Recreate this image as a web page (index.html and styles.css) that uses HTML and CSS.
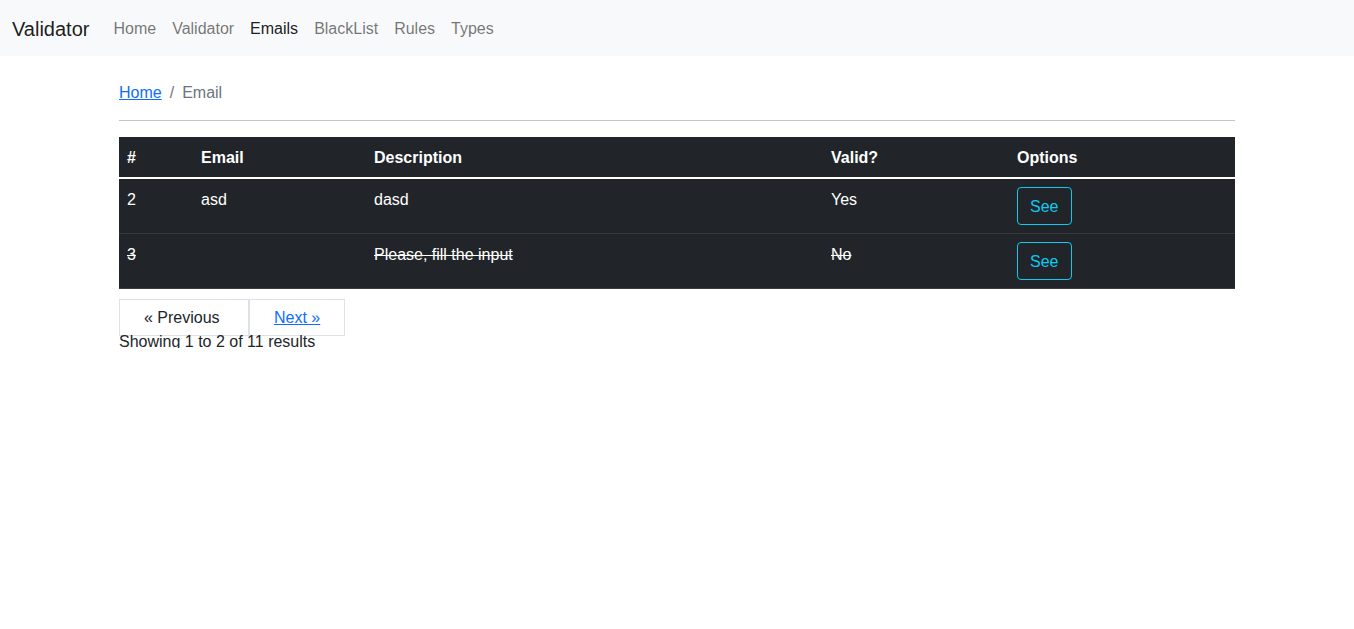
FILE: index.html
```html
<!DOCTYPE html>
<html lang="en">
<head>
<meta charset="utf-8">
<title>Validator</title>
<link rel="stylesheet" href="styles.css">
</head>
<body>
<nav class="navbar">
  <a class="brand" href="#">Validator</a>
  <ul class="nav">
    <li><a class="nav-link" href="#">Home</a></li>
    <li><a class="nav-link" href="#">Validator</a></li>
    <li><a class="nav-link active" href="#">Emails</a></li>
    <li><a class="nav-link" href="#">BlackList</a></li>
    <li><a class="nav-link" href="#">Rules</a></li>
    <li><a class="nav-link" href="#">Types</a></li>
  </ul>
</nav>
<main class="container">
  <ol class="breadcrumb">
    <li><a href="#">Home</a></li>
    <li class="sep">/</li>
    <li class="current">Email</li>
  </ol>
  <hr class="divider">
  <table class="table">
    <colgroup>
      <col class="c1"><col class="c2"><col class="c3"><col class="c4"><col class="c5">
    </colgroup>
    <thead>
      <tr><th>#</th><th>Email</th><th>Description</th><th>Valid?</th><th>Options</th></tr>
    </thead>
    <tbody>
      <tr>
        <td>2</td><td>asd</td><td>dasd</td><td>Yes</td>
        <td><a class="btn" href="#">See</a></td>
      </tr>
      <tr>
        <td><s>3</s></td><td></td><td><s>Please, fill the input</s></td><td><s>No</s></td>
        <td><a class="btn" href="#">See</a></td>
      </tr>
    </tbody>
  </table>
  <div class="pager">
    <span class="page prev">« Previous</span>
    <a class="page next" href="#">Next »</a>
  </div>
  <p class="results">Showing 1 to 2 of 11 results</p>
</main>
</body>
</html>
```
FILE: styles.css
```css
* { box-sizing: border-box; }
body {
  margin: 0;
  font-family: "Liberation Sans", Arial, sans-serif;
  font-size: 16px;
  line-height: 24px;
  color: #212529;
  background: #fff;
}
.navbar {
  display: flex;
  align-items: center;
  height: 56px;
  padding: 0 12px;
  background: #f8f9fa;
}
.brand {
  font-size: 20px;
  line-height: 30px;
  padding-top: 2px;
  color: rgba(0,0,0,.9);
  text-decoration: none;
  margin-right: 16px;
}
.nav {
  display: flex;
  list-style: none;
  margin: 0;
  padding: 0;
}
.nav-link {
  display: block;
  padding: 10px 8px 8px;
  color: rgba(0,0,0,.55);
  text-decoration: none;
}
.nav-link.active { color: rgba(0,0,0,.9); }
.container {
  max-width: 1140px;
  margin: 24px auto 0;
  padding: 0 12px;
}
.breadcrumb {
  display: flex;
  list-style: none;
  margin: 0 0 16px;
  padding: 2px 0 0;
  line-height: 22px;
}
.breadcrumb a { color: #0d6efd; text-decoration: underline; }
.breadcrumb .sep { color: #6c757d; padding: 0 8px; }
.breadcrumb .current { color: #6c757d; }
.divider {
  margin: 16px 0;
  border: 0;
  border-top: 1px solid #c4c4c4;
  height: 0;
}
.table {
  width: 100%;
  border-collapse: collapse;
  background: #212529;
  color: #fff;
  margin-bottom: 10px;
  table-layout: fixed;
}
.c1 { width: 74px; }
.c2 { width: 173px; }
.c3 { width: 457px; }
.c4 { width: 186px; }
.c5 { width: 226px; }
.table th, .table td {
  padding: 9px 8px 7px;
  text-align: left;
  vertical-align: top;
}
.table td:last-child { padding-top: 8px; padding-bottom: 8px; }
.table th { font-weight: bold; }
.table tbody tr { border-bottom: 1px solid #373b3e; }
.table tbody tr:first-child { border-top: 2px solid #fff; }
.btn {
  display: inline-block;
  padding: 7px 13px 5px 12px;
  border: 1px solid #0dcaf0;
  border-radius: 4px;
  color: #0dcaf0;
  text-decoration: none;
}
.pager {
  display: flex;
  height: 37px;
}
.page {
  display: flex;
  align-items: center;
  padding-left: 24px;
  border: 1px solid #dee2e6;
  color: #212529;
}
.prev { width: 130px; }
.next { width: 96px; color: #0d6efd; text-decoration: underline; }
.results {
  margin: 0;
  line-height: 12px;
}
```
